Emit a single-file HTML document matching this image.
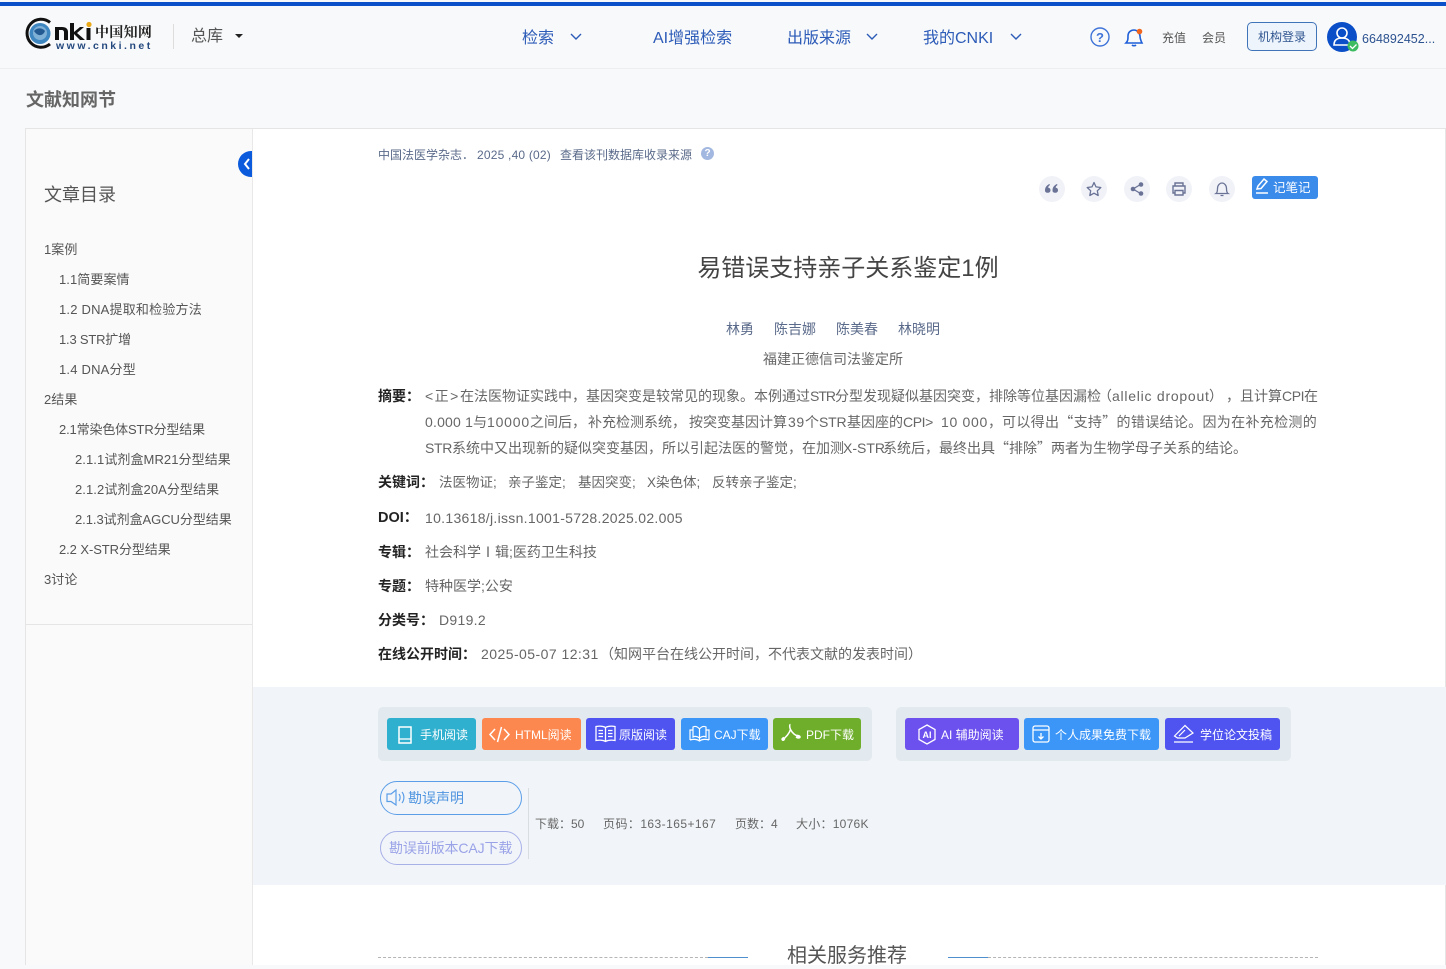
<!DOCTYPE html>
<html lang="zh-CN"><head><meta charset="utf-8"><title>易错误支持亲子关系鉴定1例</title>
<style>
html,body{margin:0;padding:0;width:1446px;height:965px;overflow:hidden;background:#f8f9fa;font-family:"Liberation Sans","Noto Sans CJK SC",sans-serif;}
.a{position:absolute;white-space:nowrap;line-height:20px;}
svg{position:absolute;overflow:visible}
.nav{font-size:16px;color:#2c5bb8;top:29px}
.toc{font-size:13px;color:#555;height:20px;letter-spacing:.08px}
.lab{font-size:14px;font-weight:bold;color:#222}
.val{font-size:14px;color:#666}
.cj{font-family:"Noto Sans CJK SC",sans-serif}
.btn{position:absolute;top:718px;height:32px;border-radius:3px;color:#fff;font-size:12px;line-height:34px;white-space:nowrap}
.btn span{position:absolute;top:0}
.ic{position:absolute;width:26px;height:26px;border-radius:50%;background:#f0f2f8;top:176px}
</style></head><body>
<div style="position:absolute;left:0;top:0;width:1446px;height:69px;background:#f8f9fa;border-bottom:1px solid #eee;box-sizing:border-box"></div>
<div style="position:absolute;left:0;top:2px;width:1446px;height:4px;background:#0b50c8"></div>

<!-- logo -->
<svg style="left:26px;top:18px" width="130" height="34" viewBox="0 0 130 34">
<circle cx="14" cy="15.500" r="10.500" fill="#3d86c0"/><circle cx="14" cy="15" r="7" fill="#7fb0d6"/><path d="M8 13c3-4 9-3 11 0-2 5-7 6-11 0z" fill="#245a92"/>
<path d="M24 4.500A14 14 0 1 0 24 26" fill="none" stroke="#111" stroke-width="3"/>
<path d="M29 22V9h7c4 0 6 2 6 5v8h-4v-8c0-1-1-2-2-2h-3v10z" fill="#111"/>
<path d="M44 22V5h4v9l6-5h4l-7 6 8 7h-5l-6-6v6z" fill="#111"/>
<rect x="60.500" y="10" width="4" height="12" fill="#111"/><circle cx="63" cy="6.500" r="2.600" fill="#e8a818"/>
</svg>
<div class="a" style="left:95px;top:22px;font-size:14px;font-family:'Noto Serif CJK SC',serif;font-weight:bold;color:#222;letter-spacing:.3px">中国知网</div>
<div class="a" style="left:56px;top:36px;font-size:10.500px;color:#24497f;font-weight:bold;letter-spacing:2.500px">www.cnki.net</div>
<div style="position:absolute;left:173px;top:24px;width:1px;height:25px;background:#ddd"></div>
<div class="a" style="left:191px;top:27px;font-size:16px;color:#555">总库</div>
<div style="position:absolute;left:235px;top:34px;border:4px solid transparent;border-top:4px solid #222;border-bottom:0"></div>

<!-- nav -->
<div class="a nav" style="left:522px">检索</div>
<svg style="left:570px;top:33px" width="12" height="8"><path d="M1 1l5 5 5-5" fill="none" stroke="#2c5bb8" stroke-width="1.400"/></svg>
<div class="a nav" style="left:653px">AI增强检索</div>
<div class="a nav" style="left:787px">出版来源</div>
<svg style="left:866px;top:33px" width="12" height="8"><path d="M1 1l5 5 5-5" fill="none" stroke="#2c5bb8" stroke-width="1.400"/></svg>
<div class="a nav" style="left:923px">我的CNKI</div>
<svg style="left:1010px;top:33px" width="12" height="8"><path d="M1 1l5 5 5-5" fill="none" stroke="#2c5bb8" stroke-width="1.400"/></svg>

<!-- right head -->
<svg style="left:1090px;top:27px" width="20" height="20"><circle cx="10" cy="10" r="9" fill="none" stroke="#3f74d8" stroke-width="1.400"/><text x="10" y="15" font-size="13" font-weight="bold" text-anchor="middle" fill="#3f74d8" font-family="Liberation Sans">?</text></svg>
<svg style="left:1125px;top:27px" width="20" height="20"><path d="M1 16c2-2 2-4 2-7 0-4 3-6 6-6s6 3 6 6c0 3 1 5 2 7zM7 18c1 1 3 1 4 0" fill="none" stroke="#1e5fd8" stroke-width="1.600"/><circle cx="14.500" cy="4.500" r="2.800" fill="#f0661e"/></svg>
<div class="a" style="left:1162px;top:28px;font-size:12px;color:#555">充值</div>
<div class="a" style="left:1202px;top:28px;font-size:12px;color:#555">会员</div>
<div class="a" style="left:1247px;top:22px;width:70px;height:29px;box-sizing:border-box;border:1px solid #3f74b8;border-radius:5px;background:#eef4fc;color:#2f5590;font-size:12px;line-height:29px;text-align:center">机构登录</div>
<div style="position:absolute;left:1327px;top:22px;width:30px;height:30px;border-radius:50%;background:#0b4fc8"></div>
<svg style="left:1327px;top:22px" width="32" height="32"><circle cx="15" cy="11" r="5" fill="none" stroke="#fff" stroke-width="1.600"/><path d="M7 23c0-5 3-7 8-7s8 2 8 7z" fill="none" stroke="#fff" stroke-width="1.600"/><circle cx="26" cy="24" r="5.500" fill="#3dbb61"/><path d="M23 24l2.500 2.500 4-4" fill="none" stroke="#fff" stroke-width="1.300"/></svg>
<div class="a" style="left:1362px;top:29px;font-size:12.500px;color:#2c5290;letter-spacing:.02px">664892452...</div>

<div class="a" style="left:26px;top:90px;font-size:18px;font-weight:bold;color:#666">文献知网节</div>

<!-- card -->
<div style="position:absolute;left:25px;top:128px;width:1421px;height:837px;background:#fff;border:1px solid #e5e5e5;border-bottom:0;box-sizing:border-box"></div>
<div style="position:absolute;left:26px;top:129px;width:226px;height:836px;background:#fafafa"></div>
<div style="position:absolute;left:252px;top:129px;width:1px;height:836px;background:#e8e8e8"></div>
<div style="position:absolute;left:26px;top:624px;width:226px;height:1px;background:#e5e5e5"></div>
<div style="position:absolute;left:238px;top:151px;width:14px;height:26px;background:#0b5bdc;border-radius:13px 0 0 13px"></div>
<svg style="left:242px;top:157px" width="9" height="14"><path d="M7 2L3 7l4 5" fill="none" stroke="#fff" stroke-width="2"/></svg>

<div class="a" style="left:44px;top:185px;font-size:18px;color:#555">文章目录</div>
<div class="a toc" style="left:44px;top:240px">1案例</div>
<div class="a toc" style="left:59px;top:270px">1.1简要案情</div>
<div class="a toc" style="left:59px;top:300px;letter-spacing:.2px">1.2 DNA提取和检验方法</div>
<div class="a toc" style="left:59px;top:330px;letter-spacing:-.2px">1.3 STR扩增</div>
<div class="a toc" style="left:59px;top:360px;letter-spacing:.2px">1.4 DNA分型</div>
<div class="a toc" style="left:44px;top:390px">2结果</div>
<div class="a toc" style="left:59px;top:420px;letter-spacing:-.15px">2.1常染色体STR分型结果</div>
<div class="a toc" style="left:75px;top:450px">2.1.1试剂盒MR21分型结果</div>
<div class="a toc" style="left:75px;top:480px">2.1.2试剂盒20A分型结果</div>
<div class="a toc" style="left:75px;top:510px;letter-spacing:-.05px">2.1.3试剂盒AGCU分型结果</div>
<div class="a toc" style="left:59px;top:540px;letter-spacing:-.08px">2.2 X-STR分型结果</div>
<div class="a toc" style="left:44px;top:570px">3讨论</div>

<!-- article head -->
<div class="a" style="left:378px;top:145px;font-size:12px;color:#5a6a8a">中国法医学杂志．</div>
<div class="a" style="left:477px;top:145px;font-size:12px;color:#5a6a8a;letter-spacing:.2px">2025 ,40 (02)</div>
<div class="a" style="left:560px;top:145px;font-size:12px;color:#5a6a8a">查看该刊数据库收录来源</div>
<div style="position:absolute;left:701px;top:147px;width:13px;height:13px;border-radius:50%;background:#a3b8e0;color:#fff;font-size:10px;line-height:13px;text-align:center;font-weight:bold">?</div>

<div class="ic" style="left:1039px"></div>
<svg style="left:1044px;top:183px" width="16" height="12"><path d="M1 7.500C1 4 3 2 5.500 1L6 2C4.800 2.800 4.200 3.700 4.200 4.800c1.300 0 2.300 1 2.300 2.400S5.400 9.800 3.800 9.800C2 9.800 1 8.900 1 7.500zM8.500 7.500C8.500 4 10.500 2 13 1l.5 1c-1.200.8-1.800 1.700-1.800 2.800 1.300 0 2.300 1 2.300 2.400s-1.100 2.600-2.700 2.600c-1.800 0-2.800-.9-2.800-2.300z" fill="#6a7396"/></svg>
<div class="ic" style="left:1081px"></div>
<svg style="left:1086px;top:181px" width="16" height="16"><path d="M8 1.500l2 4.400 4.800.6-3.500 3.300.9 4.700L8 12.200l-4.200 2.300.9-4.700L1.200 6.500 6 5.900z" fill="none" stroke="#6a7396" stroke-width="1.300" stroke-linejoin="round"/></svg>
<div class="ic" style="left:1124px"></div>
<svg style="left:1129px;top:181px" width="16" height="16"><path d="M11.500 3.500l-7.500 4.500 7.500 4.500" fill="none" stroke="#6a7396" stroke-width="1.300"/><circle cx="12" cy="3.500" r="2.300" fill="#6a7396"/><circle cx="12" cy="12.500" r="2.300" fill="#6a7396"/><circle cx="4" cy="8" r="2.300" fill="#6a7396"/></svg>
<div class="ic" style="left:1166px"></div>
<svg style="left:1171px;top:181px" width="16" height="16"><path d="M4 5V2h8v3M4 12H2V5h12v7h-2M4 9.500h8V14H4z" fill="none" stroke="#6a7396" stroke-width="1.400"/></svg>
<div class="ic" style="left:1209px"></div>
<svg style="left:1214px;top:181px" width="16" height="16"><path d="M2 12.500c1.500-1 1.500-3 1.500-5C3.500 4 6 2 8 2s4.500 2 4.500 5.500c0 2 0 4 1.500 5zM6.500 14.500h3" fill="none" stroke="#6a7396" stroke-width="1.300"/></svg>
<div style="position:absolute;left:1252px;top:176px;width:66px;height:23px;background:#3b8beb;border-radius:3px"></div>
<svg style="left:1254px;top:177px" width="18" height="20"><path d="M3 12l1-3 6-7 3 2.500-6 7zM2 16h12" fill="none" stroke="#fff" stroke-width="1.500"/></svg>
<div class="a" style="left:1273px;top:178px;font-size:12.500px;color:#fff">记笔记</div>

<div class="a" style="left:253px;width:1190px;text-align:center;top:254px;font-size:24px;line-height:30px;color:#444">易错误支持亲子关系鉴定1例</div>
<div class="a" style="left:726px;top:319px;font-size:14px;color:#5a6a8a">林勇</div>
<div class="a" style="left:774px;top:319px;font-size:14px;color:#5a6a8a">陈吉娜</div>
<div class="a" style="left:836px;top:319px;font-size:14px;color:#5a6a8a">陈美春</div>
<div class="a" style="left:898px;top:319px;font-size:14px;color:#5a6a8a">林晓明</div>
<div class="a" style="left:763px;top:349px;font-size:14px;color:#666">福建正德信司法鉴定所</div>

<div class="a lab" style="left:378px;top:386px">摘要：</div>
<!-- line 1 -->
<div class="a val" style="left:425px;top:386px;letter-spacing:1.500px">&lt;正&gt;</div>
<div class="a val" style="left:460px;top:386px">在法医物证实践中，基因突变是较常见的现象。本例通过</div>
<div class="a val" style="left:810px;top:386px;letter-spacing:-1px">STR</div>
<div class="a val" style="left:835px;top:386px">分型发现疑似基因突变，排除等位基因漏检</div>
<div class="a val" style="left:1098px;top:386px">（</div>
<div class="a val" style="left:1112px;top:386px;letter-spacing:.75px">allelic dropout</div>
<div class="a val" style="left:1209px;top:386px">）</div>
<div class="a val" style="left:1226px;top:386px">，且计算</div>
<div class="a val" style="left:1282px;top:386px;letter-spacing:-.4px">CPI</div>
<div class="a val" style="left:1304px;top:386px">在</div>
<!-- line 2 -->
<div class="a val" style="left:425px;top:412px;letter-spacing:.2px">0.000 1</div>
<div class="a val" style="left:473px;top:412px">与</div>
<div class="a val" style="left:487px;top:412px;letter-spacing:.8px">10000</div>
<div class="a val" style="left:530px;top:412px">之间后，</div>
<div class="a val" style="left:588px;top:412px">补充检测系统，</div>
<div class="a val" style="left:689px;top:412px">按突变基因计算</div>
<div class="a val" style="left:788px;top:412px;letter-spacing:.6px">39</div>
<div class="a val" style="left:805px;top:412px">个</div>
<div class="a val" style="left:819px;top:412px;letter-spacing:-.2px">STR</div>
<div class="a val" style="left:847px;top:412px">基因座的</div>
<div class="a val" style="left:903px;top:412px;letter-spacing:-.4px">CPI&gt;</div>
<div class="a val" style="left:941px;top:412px;letter-spacing:.7px">10 000</div>
<div class="a val" style="left:988px;top:412px">，</div>
<div class="a val cj" style="left:1002px;top:412px;letter-spacing:.32px">可以得出“支持”的错误结论。因为在补充检测的</div>
<!-- line 3 -->
<div class="a val" style="left:425px;top:438px;letter-spacing:-.3px">STR</div>
<div class="a val" style="left:452px;top:438px">系统中又出现新的疑似突变基因，所以引起法医的警觉，在加测</div>
<div class="a val" style="left:843px;top:438px">X-STR</div>
<div class="a val cj" style="left:883px;top:438px">系统后，最终出具“排除”两者为生物学母子关系的结论。</div>

<div class="a lab" style="left:378px;top:472px">关键词：</div>
<div class="a val" style="left:439px;top:473px;font-size:13.500px">法医物证;</div>
<div class="a val" style="left:508px;top:473px;font-size:13.500px">亲子鉴定;</div>
<div class="a val" style="left:578px;top:473px;font-size:13.500px">基因突变;</div>
<div class="a val" style="left:647px;top:473px;font-size:13.500px">X染色体;</div>
<div class="a val" style="left:712px;top:473px;font-size:13.500px">反转亲子鉴定;</div>

<div class="a lab" style="left:378px;top:508px;font-size:14.500px">DOI：</div>
<div class="a val" style="left:425px;top:508px;letter-spacing:.3px">10.13618/j.issn.1001-5728.2025.02.005</div>
<div class="a lab" style="left:378px;top:542px">专辑：</div>
<div class="a val" style="left:425px;top:542px">社会科学Ⅰ辑;医药卫生科技</div>
<div class="a lab" style="left:378px;top:576px">专题：</div>
<div class="a val" style="left:425px;top:576px">特种医学;公安</div>
<div class="a lab" style="left:378px;top:610px">分类号：</div>
<div class="a val" style="left:439px;top:610px;letter-spacing:.3px">D919.2</div>
<div class="a lab" style="left:378px;top:644px">在线公开时间：</div>
<div class="a val" style="left:481px;top:644px;letter-spacing:.45px">2025-05-07 12:31</div>
<div class="a val" style="left:600px;top:644px">（知网平台在线公开时间，不代表文献的发表时间）</div>

<!-- buttons band -->
<div style="position:absolute;left:253px;top:687px;width:1193px;height:198px;background:#f1f5f9"></div>
<div style="position:absolute;left:378px;top:707px;width:494px;height:54px;background:#e2e9ef;border-radius:5px"></div>
<div style="position:absolute;left:896px;top:707px;width:395px;height:54px;background:#e2e9ef;border-radius:5px"></div>

<div class="btn" style="left:387px;width:89px;background:#30b0cf"><span style="left:33px">手机阅读</span></div>
<svg style="left:398px;top:726px" width="14" height="18"><rect x="1" y="1" width="12" height="16" fill="none" stroke="#fff" stroke-width="1.500"/><path d="M1 13h12" stroke="#fff" stroke-width="1.300"/></svg>
<div class="btn" style="left:482px;width:99px;background:#fd884f"><span style="left:33px">HTML阅读</span></div>
<svg style="left:489px;top:726px" width="21" height="17"><path d="M6 3L1 8.500 6 14M15 3l5 5.500L15 14M12.500 1L8.500 16" fill="none" stroke="#fff" stroke-width="1.500"/></svg>
<div class="btn" style="left:586px;width:89px;background:#4f54f0"><span style="left:33px">原版阅读</span></div>
<svg style="left:595px;top:725px" width="21" height="18"><path d="M1 1.500c3-.5 7-.5 9.500 1 2.500-1.500 6.500-1.500 9.500-1v14c-3-.5-7-.5-9.500 1-2.500-1.500-6.500-1.500-9.500-1zM10.500 2.500v14M3.500 5.500h4.500M3.500 8.500h4.500M3.500 11.500h4.500M13 5.500h4.500M13 8.500h4.500M13 11.500h4.500" fill="none" stroke="#fff" stroke-width="1.300"/></svg>
<div class="btn" style="left:681px;width:87px;background:#3b96f8"><span style="left:33px">CAJ下载</span></div>
<svg style="left:689px;top:725px" width="21" height="18"><path d="M1 15V5h3M20 15V5h-3M10.500 4v11M1 15c3-1 7-1 9.500 1 2.500-2 6.500-2 9.500-1M4 2v10c2-1 4-1 6.500 1 2.500-2 4.500-2 6.500-1V2c-2-1-4.500-.5-6.500 2-2-2.500-4.500-3-6.500-2z" fill="none" stroke="#fff" stroke-width="1.200"/></svg>
<div class="btn" style="left:773px;width:88px;background:#6fae2b"><span style="left:33px">PDF下载</span></div>
<svg style="left:780px;top:723px" width="22" height="20"><path d="M10.500 1.500c-1.200 0-1 3 0 5 1.500 3 4.500 6 9 7.500M10.500 6.500C9.500 10 6 14.500 2 17M4 14.500c-1.500.5-2.500 1.500-1.500 2.500 1 .8 2-.5 2-1.500M16 12.500c2-.5 4 .5 4 1.500s-2 1.500-4 0" fill="none" stroke="#fff" stroke-width="1.500"/></svg>

<div class="btn" style="left:905px;width:114px;background:#6d51ee"><span style="left:36px">AI 辅助阅读</span></div>
<svg style="left:917px;top:724px" width="20" height="21"><path d="M10 1l8 4.500v10L10 20l-8-4.500v-10z" fill="none" stroke="#fff" stroke-width="1.300"/><text x="10" y="14" font-size="9" font-weight="bold" text-anchor="middle" fill="#fff" font-family="Liberation Sans">AI</text></svg>
<div class="btn" style="left:1024px;width:135px;background:#3b96f8"><span style="left:31px">个人成果免费下载</span></div>
<svg style="left:1032px;top:725px" width="18" height="18"><rect x="1" y="1" width="16" height="16" rx="2" fill="none" stroke="#fff" stroke-width="1.300"/><path d="M1 5h16M9 8v6M6.500 11.500L9 14l2.500-2.500" fill="none" stroke="#fff" stroke-width="1.300"/></svg>
<div class="btn" style="left:1165px;width:115px;background:#4f54f0"><span style="left:35px">学位论文投稿</span></div>
<svg style="left:1173px;top:724px" width="22" height="20"><path d="M1.500 12L12 1.500 20 9l-8 5H4.500zM6 12l6-6M1 18h19" fill="none" stroke="#fff" stroke-width="1.200"/></svg>

<div style="position:absolute;left:380px;top:781px;width:142px;height:34px;box-sizing:border-box;border:1px solid #5b9ee8;border-radius:17px"></div>
<svg style="left:386px;top:789px" width="20" height="18"><path d="M1 5h4l5-4v15l-5-3.500H1zM13 5c1.500 2 1.500 5 0 7M16 3c2.500 3 2.500 8 0 11" fill="none" stroke="#5b9ee8" stroke-width="1.200"/></svg>
<div class="a" style="left:408px;top:788px;font-size:14px;color:#4f94e0">勘误声明</div>
<div style="position:absolute;left:380px;top:831px;width:142px;height:34px;box-sizing:border-box;border:1px solid #a8b0e8;border-radius:17px"></div>
<div class="a" style="left:389px;top:838px;font-size:14px;letter-spacing:-.12px;color:#9aa2e8">勘误前版本CAJ下载</div>
<div style="position:absolute;left:528px;top:788px;width:1px;height:71px;background:#d8dde2"></div>
<div class="a" style="left:535px;top:814px;font-size:12px;color:#666">下载：50</div>
<div class="a" style="left:603px;top:814px;font-size:12px;color:#666;letter-spacing:.44px">页码：163-165+167</div>
<div class="a" style="left:735px;top:814px;font-size:12px;color:#666">页数：4</div>
<div class="a" style="left:796px;top:814px;font-size:12px;color:#666;letter-spacing:.25px">大小：1076K</div>

<!-- related -->
<div style="position:absolute;left:378px;top:957px;width:330px;border-top:1px dashed #b5b5b5"></div>
<div style="position:absolute;left:708px;top:957px;width:40px;height:1px;background:#4f8fd0"></div>
<div style="position:absolute;left:988px;top:957px;width:330px;border-top:1px dashed #b5b5b5"></div>
<div style="position:absolute;left:948px;top:957px;width:40px;height:1px;background:#4f8fd0"></div>
<div class="a" style="left:787px;top:943px;font-size:20px;line-height:26px;color:#555">相关服务推荐</div>
</body></html>
